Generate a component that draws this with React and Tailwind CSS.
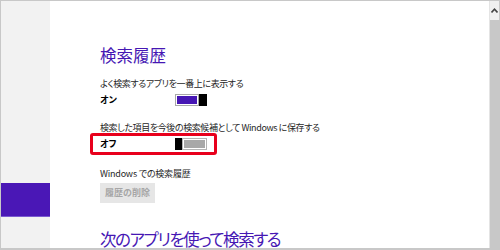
import React from 'react';

const jp = "font-['Noto_Sans_CJK_JP','Noto_Sans',sans-serif] [font-feature-settings:'palt']";

const Toggle = ({ on }) => {
  if (on) {
    return (
      <div className="flex h-[12px] w-[32px]">
        <div className="flex-1 border border-[#a8a8a8] bg-white p-[1px]">
          <div className="h-full w-full bg-[#4617b4]" />
        </div>
        <div className="h-full w-[8px] bg-black" />
      </div>
    );
  }
  return (
    <div className="flex h-[12px] w-[32px]">
      <div className="h-full w-[7px] bg-black" />
      <div className="flex-1 border border-[#b4b4b4] bg-white p-[1px]">
        <div className="h-full w-full bg-[#a8a8a8]" />
      </div>
    </div>
  );
};

const SettingRow = ({ label, value, on, highlight }) => (
  <div>
    <p className="text-[9px] leading-[12px] tracking-[-0.4px] text-[#262626]">{label}</p>
    <div className="relative mt-[4px] flex h-[12px] items-center">
      <span className="w-[75px] text-[9px] font-bold leading-[12px] text-black">{value}</span>
      <Toggle on={on} />
      {highlight && (
        <div className="absolute -left-[10px] -top-[5px] h-[22px] w-[127px] rounded-[3px] border-[3px] border-[#e8001c]" />
      )}
    </div>
  </div>
);

export default function App() {
  return (
    <div className={`flex h-[250px] w-[500px] overflow-hidden border border-b-2 border-[#c8c8c8] bg-white ${jp}`}>
      <div className="flex w-[49px] shrink-0 flex-col bg-[#f2f2f2] pt-[182px]">
        <div className="h-[34px] border-b border-[#7a5ad0] bg-[#4a17b6]" />
      </div>

      <div className="flex-1 pl-[50px] pt-[44px]">
        <h2 className="text-[16.5px] leading-[20px] text-[#4617b4]">検索履歴</h2>

        <div className="mt-[13px]">
          <SettingRow label="よく検索するアプリを一番上に表示する" value="オン" on />
        </div>

        <div className="mt-[16px]">
          <SettingRow
            label="検索した項目を今後の検索候補として Windows に保存する"
            value="オフ"
            highlight
          />
        </div>

        <p className="mt-[18px] text-[9px] leading-[12px] tracking-[-0.2px] text-[#262626]">Windows での検索履歴</p>
        <button className="mt-[3px] flex h-[20px] w-[55px] items-center justify-center bg-[#e6e6e6] text-[9px] font-bold text-[#a6a6a6]">
          履歴の削除
        </button>

        <h2 className="mt-[26px] whitespace-nowrap text-[16.5px] leading-[20px] tracking-[-1.4px] text-[#4617b4]">
          次のアプリを使って検索する
        </h2>
      </div>

      <div className="flex w-[10px] shrink-0 flex-col border-l border-[#e4e4e4] bg-[#c8c8c8]">
        <div className="flex h-[19px] items-center justify-center bg-[#f0f0f0]">
          <svg width="7" height="5" viewBox="0 0 7 5">
            <path d="M0.5 4.5 L3.5 1.2 L6.5 4.5" fill="none" stroke="#444" strokeWidth="1.6" />
          </svg>
        </div>
      </div>
    </div>
  );
}
